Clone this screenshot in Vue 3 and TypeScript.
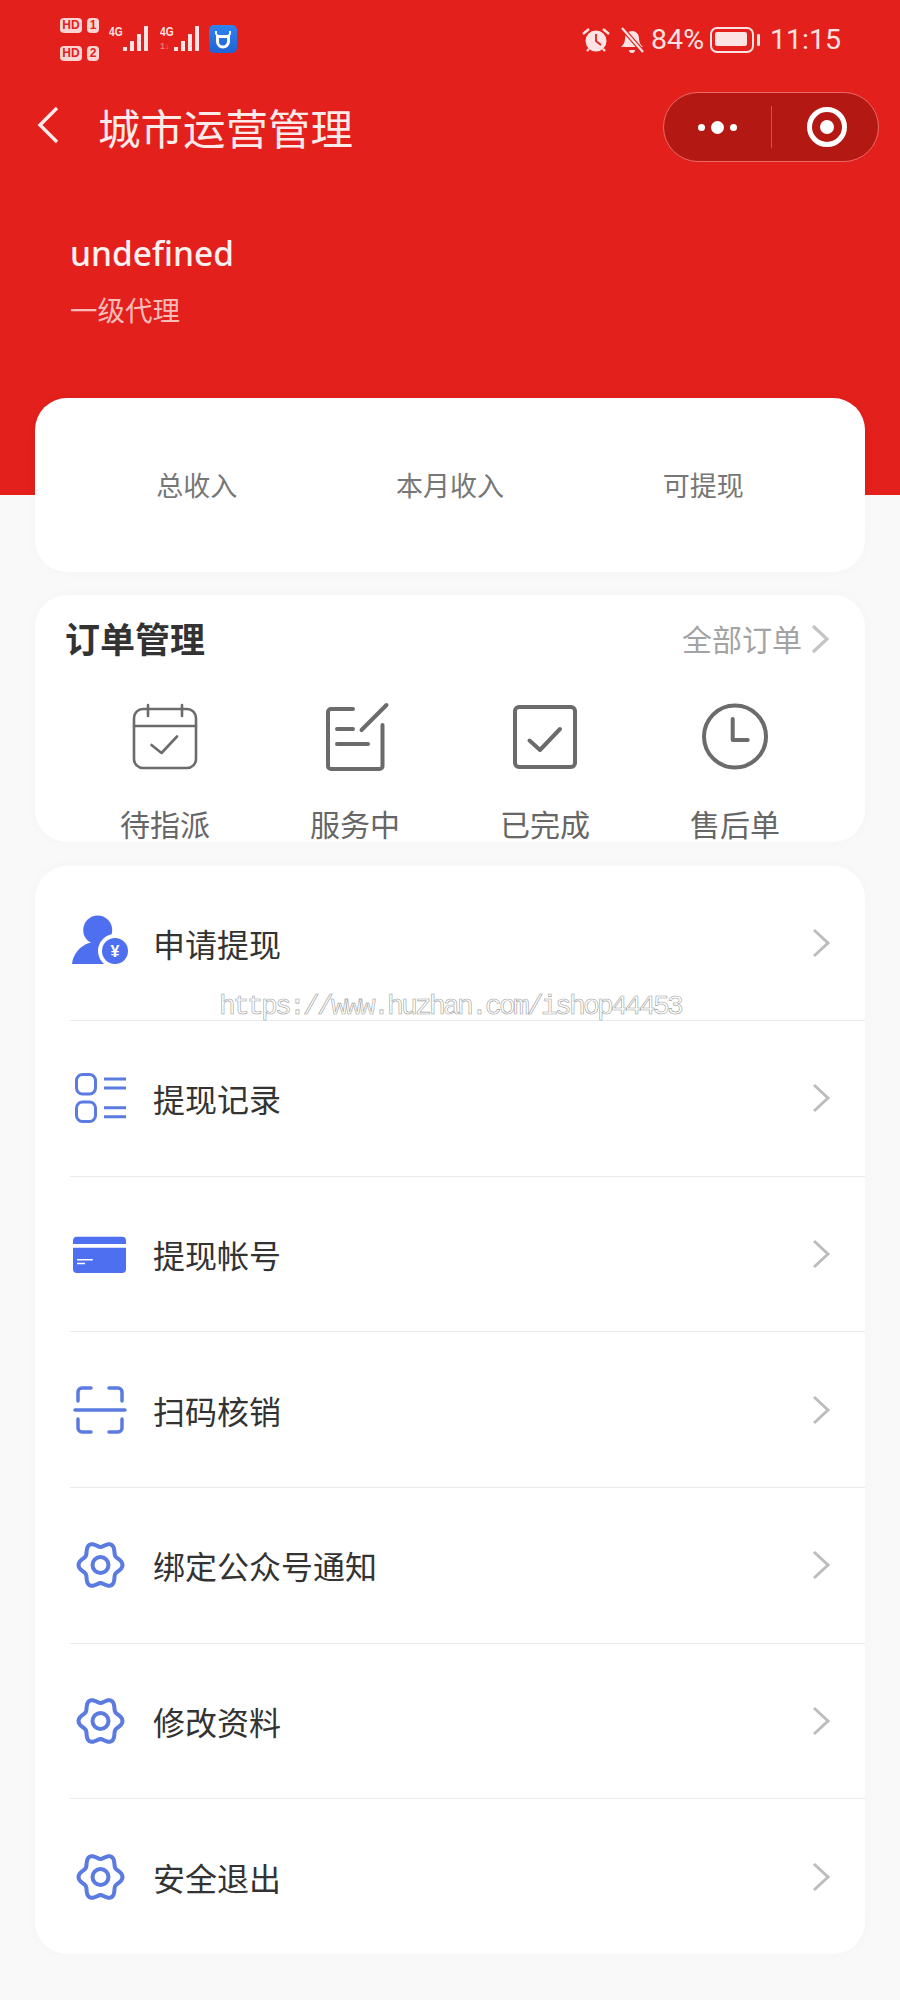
<script setup lang="ts">
interface MenuRow {
  label: string
  icon: 'user' | 'list' | 'card' | 'scan' | 'gear'
}

const stats = ['总收入', '本月收入', '可提现']

const menuRows: MenuRow[] = [
  { label: '申请提现', icon: 'user' },
  { label: '提现记录', icon: 'list' },
  { label: '提现帐号', icon: 'card' },
  { label: '扫码核销', icon: 'scan' },
  { label: '绑定公众号通知', icon: 'gear' },
  { label: '修改资料', icon: 'gear' },
  { label: '安全退出', icon: 'gear' }
]

// six soft lobes, wider on the sides than at the top
const gearPath = (() => {
  const pts: string[] = []
  for (let i = 0; i < 72; i++) {
    const a = (i / 72) * Math.PI * 2
    const r = 19.5 + 2.5 * Math.cos(6 * a)
    pts.push(`${(30.5 + r * Math.cos(a)).toFixed(2)} ${(30 + 1.06 * r * Math.sin(a)).toFixed(2)}`)
  }
  return `M${pts.join('L')}Z`
})()
</script>

<template>
  <div class="page">
    <header class="hero">
      <div class="status">
        <div class="sims">
          <div class="sim"><span class="hd">HD</span><span class="num">1</span></div>
          <div class="sim"><span class="hd">HD</span><span class="num">2</span></div>
        </div>
        <div class="signal">
          <span class="net">4G</span>
          <span class="bars"><i></i><i></i><i></i><i></i></span>
        </div>
        <div class="signal">
          <span class="net">4G</span>
          <span class="updown">1↓</span>
          <span class="bars"><i></i><i></i><i></i><i></i></span>
        </div>
        <div class="app-badge">
          <svg viewBox="0 0 28 28" width="28" height="28">
            <path d="M7 6v3l2 2h10l2-2V6" fill="none" stroke="#fff" stroke-width="1.800" />
            <path d="M8.500 11.500h11v5a5.500 5.500 0 0 1-11 0z" fill="none" stroke="#fff" stroke-width="3" />
          </svg>
        </div>
        <div class="status-right">
          <svg class="alarm" viewBox="0 0 30 28" width="30" height="28">
            <circle cx="15" cy="15" r="10.500" fill="#fde3e3" />
            <path d="M15 8v7l5 4" fill="none" stroke="#e3201b" stroke-width="1.800" />
            <path d="M2 8l6-5M28 8l-6-5M6 25l2-2M24 25l-2-2" stroke="#fde3e3" stroke-width="2.400" />
          </svg>
          <svg class="bell" viewBox="0 0 26 28" width="26" height="28">
            <path d="M2 21c2-2 4-4 4-9a7 7 0 0 1 14 0c0 5 2 7 4 9z" fill="#fde3e3" />
            <path d="M10 24h6a3 3 0 0 1-6 0z" fill="#fde3e3" />
            <path d="M3 2l21 24" stroke="#e3201b" stroke-width="4.500" />
            <path d="M3 2l21 24" stroke="#fde3e3" stroke-width="2.200" />
          </svg>
          <span class="pct">84%</span>
          <span class="battery"><span class="level"></span></span>
          <span class="clock">11:15</span>
        </div>
      </div>

      <div class="nav">
        <svg class="back" viewBox="0 0 22 40" width="22" height="40">
          <path d="M20 3L3 20l17 17" fill="none" stroke="#fdeaea" stroke-width="3.400" />
        </svg>
        <span class="title">城市运营管理</span>
        <div class="capsule">
          <div class="more"><i></i><i class="big"></i><i></i></div>
          <div class="cap-line"></div>
          <div class="target"><i></i></div>
        </div>
      </div>

      <div class="who">
        <div class="name">undefined</div>
        <div class="level-name">一级代理</div>
      </div>
    </header>

    <section class="card stats">
      <div v-for="s in stats" :key="s" class="stat">{{ s }}</div>
    </section>

    <section class="card orders">
      <div class="orders-head">
        <span class="orders-title">订单管理</span>
        <span class="orders-all">全部订单</span>
        <svg class="all-chev" viewBox="0 0 20 30" width="20" height="30">
          <path d="M3 2l14 13L3 28" fill="none" stroke="#c4c4c4" stroke-width="3.200" />
        </svg>
      </div>
      <div class="order-grid">
        <div class="order-item">
          <svg viewBox="0 0 70 70" width="70" height="70" fill="none" stroke="#6b6b6b" stroke-width="2.600" stroke-linecap="round" stroke-linejoin="round">
            <rect x="4" y="7" width="62" height="59" rx="9" />
            <path d="M4 24h62M18 3v11M52 3v11" />
            <path d="M21.500 43l10 8 15.500-16.500" />
          </svg>
          <span>待指派</span>
        </div>
        <div class="order-item">
          <svg viewBox="0 0 70 70" width="70" height="70" fill="none" stroke="#6b6b6b" stroke-width="4" stroke-linecap="round" stroke-linejoin="round">
            <path d="M33 7H11a3 3 0 0 0-3 3v54a3 3 0 0 0 3 3h48.500a3 3 0 0 0 3-3V23" />
            <path d="M41.500 28L66.500 3M17 27h16M17 42h31" />
          </svg>
          <span>服务中</span>
        </div>
        <div class="order-item">
          <svg viewBox="0 0 70 70" width="70" height="70" fill="none" stroke="#6b6b6b" stroke-width="4" stroke-linecap="round" stroke-linejoin="round">
            <rect x="5" y="5" width="60" height="60" rx="4" />
            <path d="M19.500 38.500L30 48l20-21" />
          </svg>
          <span>已完成</span>
        </div>
        <div class="order-item">
          <svg viewBox="0 0 70 70" width="70" height="70" fill="none" stroke="#6b6b6b" stroke-width="4" stroke-linecap="round" stroke-linejoin="round">
            <circle cx="35" cy="34.500" r="31" />
            <path d="M32.700 17v21h15" />
          </svg>
          <span>售后单</span>
        </div>
      </div>
    </section>

    <section class="card menu">
      <div v-for="row in menuRows" :key="row.label" class="menu-row">
        <svg v-if="row.icon === 'user'" viewBox="0 0 60 60" width="60" height="60">
          <circle cx="27.700" cy="17" r="14.500" fill="#4d6ff0" />
          <path d="M2 51c1-10 8-18 17-21h17c6 3 8 9 8 21z" fill="#4d6ff0" />
          <circle cx="45" cy="38" r="17" fill="#fff" />
          <circle cx="45" cy="38" r="13" fill="#4d6ff0" />
          <text x="45" y="44" text-anchor="middle" class="yen">¥</text>
        </svg>
        <svg v-else-if="row.icon === 'list'" viewBox="0 0 60 60" width="60" height="60" fill="none" stroke="#5b7be0" stroke-width="3">
          <rect x="6.500" y="6.500" width="19" height="19.500" rx="6" />
          <rect x="6.500" y="34" width="19" height="19.500" rx="6" />
          <path d="M34 11h22M34 20h22M34 39.700h22M34 48.700h22" />
        </svg>
        <svg v-else-if="row.icon === 'card'" viewBox="0 0 60 60" width="60" height="60">
          <path d="M3 16.700a4 4 0 0 1 4-4h45a4 4 0 0 1 4 4V20H3z" fill="#4d6ff0" />
          <path d="M3 23.700h53V45a4 4 0 0 1-4 4H7a4 4 0 0 1-4-4z" fill="#4d6ff0" />
          <path d="M7 35.700h15.700M7 39.500h8" stroke="#fff" stroke-width="1.600" />
        </svg>
        <svg v-else-if="row.icon === 'scan'" viewBox="0 0 60 60" width="60" height="60" fill="none" stroke="#5b7be0" stroke-width="3.500" stroke-linecap="round">
          <path d="M21 8h-9a4 4 0 0 0-4 4v9M39 8h9a4 4 0 0 1 4 4v9M21 52h-9a4 4 0 0 1-4-4v-9M39 52h9a4 4 0 0 0 4-4v-9" />
          <path d="M5 30h50" />
        </svg>
        <svg v-else viewBox="0 0 60 60" width="60" height="60" fill="none" stroke="#5b7be0" stroke-width="4" stroke-linejoin="round">
          <path :d="gearPath" />
          <circle cx="30.500" cy="30" r="8" />
        </svg>
        <span class="menu-label">{{ row.label }}</span>
        <svg class="chev" viewBox="0 0 20 32" width="20" height="32">
          <path d="M3 3l14 13L3 29" fill="none" stroke="#bdbdbd" stroke-width="3" />
        </svg>
      </div>
      <span class="mark">https://www.huzhan.com/ishop44453</span>
    </section>
  </div>
</template>

<style>
body {
  background: #f9f9f9;
}
</style>

<style scoped>
.page {
  height: 2000px;
  background: #f9f9f9;
  font-family: "Noto Sans CJK SC", "Noto Sans", sans-serif;
  overflow: hidden;
}

.hero {
  height: 495px;
  background: #e3201b;
  color: #fdeaea;
}

.status {
  height: 82px;
  padding: 11px 59px 0 60px;
  display: flex;
  align-items: flex-start;
  box-sizing: border-box;
  color: #fde3e3;
}

.sim {
  display: flex;
  gap: 5px;
  height: 28px;
  align-items: center;
}

.hd,
.num {
  font: bold 12px/15px "Liberation Sans", sans-serif;
  background: #fbd5d3;
  color: #e3201b;
  border-radius: 4px;
  text-align: center;
}

.hd {
  width: 22px;
}

.num {
  width: 12px;
}

.signal {
  margin: 15px 0 0 10px;
  width: 41px;
  height: 25px;
  position: relative;
}

.net {
  font: bold 12px/13px "Liberation Sans", sans-serif;
  position: absolute;
  left: 0;
  top: 0;
  transform: scaleX(0.85);
  transform-origin: left;
}

.updown {
  font: bold 9px/10px "Liberation Sans", sans-serif;
  position: absolute;
  left: 0;
  bottom: 0;
  color: #ef7470;
}

.bars {
  position: absolute;
  left: 14px;
  bottom: 0;
  display: flex;
  align-items: flex-end;
  gap: 3px;
}

.bars i {
  width: 4px;
  background: #fde3e3;
  display: block;
}

.bars i:nth-child(1) { height: 4px; }
.bars i:nth-child(2) { height: 10px; }
.bars i:nth-child(3) { height: 17px; }
.bars i:nth-child(4) { height: 25px; }

.app-badge {
  width: 28px;
  height: 28px;
  margin: 14px 0 0 8px;
  border-radius: 5px;
  background: linear-gradient(180deg, #2f84ef, #1f62d4);
}

.status-right {
  margin-left: auto;
  margin-top: 14px;
  display: flex;
  align-items: center;
  height: 30px;
}

.bell {
  margin-left: 8px;
}

.pct,
.clock {
  font: 28.500px/30px Roboto, sans-serif;
}

.pct {
  margin-left: 6px;
}

.battery {
  margin-left: 6px;
  width: 44px;
  height: 26px;
  border: 2.500px solid #fde3e3;
  border-radius: 7px;
  padding: 3px;
  box-sizing: border-box;
  position: relative;
}

.battery::after {
  content: "";
  position: absolute;
  right: -8px;
  top: 4.500px;
  width: 3px;
  height: 12px;
  background: #fde3e3;
  border-radius: 1px;
}

.level {
  display: block;
  width: 32px;
  height: 14px;
  background: #fde3e3;
  border-radius: 2px;
}

.clock {
  margin-left: 16px;
}

.nav {
  height: 90px;
  padding: 0 21px 0 37px;
  display: flex;
  align-items: center;
}

.back {
  margin-right: 39px;
  margin-top: -4px;
}

.title {
  font-size: 42.500px;
  line-height: 60px;
}

.capsule {
  margin-left: auto;
  width: 216px;
  height: 70px;
  box-sizing: border-box;
  background: #b41813;
  border: 1px solid #e96a66;
  border-radius: 35px;
  display: flex;
  align-items: center;
}

.more {
  width: 107px;
  display: flex;
  align-items: center;
  justify-content: center;
  gap: 6px;
}

.more i {
  width: 7px;
  height: 7px;
  border-radius: 50%;
  background: #fff;
}

.more i.big {
  width: 13px;
  height: 13px;
}

.cap-line {
  width: 1px;
  height: 42px;
  background: #d4524e;
}

.target {
  flex: 1;
  padding-left: 4px;
  display: flex;
  justify-content: center;
}

.target i {
  width: 40px;
  height: 40px;
  box-sizing: border-box;
  border: 5px solid #fff;
  border-radius: 50%;
  display: flex;
  align-items: center;
  justify-content: center;
}

.target i::after {
  content: "";
  width: 14px;
  height: 14px;
  border-radius: 50%;
  background: #fff;
}

.who {
  padding: 59px 70px 0;
}

.name {
  font: 500 33.500px/44px "Noto Sans", sans-serif;
  color: #fdf0f0;
}

.level-name {
  margin-top: 16px;
  font-size: 27.500px;
  line-height: 36px;
  color: #f8bdbb;
}

.card {
  margin: 0 35px;
  background: #fff;
  border-radius: 32px;
  box-shadow: 0 0 14px rgba(0, 0, 0, 0.025);
}

.stats {
  margin-top: -97px;
  height: 174px;
  padding: 0 35px;
  display: grid;
  grid-template-columns: repeat(3, 1fr);
  align-items: center;
  position: relative;
}

.stat {
  margin-top: -1px;
  text-align: center;
  font-size: 27px;
  color: #777;
}

.orders {
  margin-top: 23px;
  height: 247px;
  padding: 0 35px;
}

.orders-head {
  height: 84px;
  margin-left: -5px;
  display: flex;
  align-items: center;
}

.orders-title {
  font-size: 35px;
  font-weight: 700;
  color: #333;
}

.orders-all {
  margin-left: auto;
  margin-right: 8px;
  margin-top: 2px;
  font-size: 30px;
  color: #a3a3a3;
}

.all-chev {
  margin-top: 4px;
}

.order-grid {
  margin-top: 23px;
  display: grid;
  grid-template-columns: repeat(4, 1fr);
}

.order-item {
  display: flex;
  flex-direction: column;
  align-items: center;
  font-size: 30px;
  line-height: 34px;
  color: #666;
}

.order-item span {
  margin-top: 34px;
}

.menu {
  position: relative;
  margin-top: 24px;
  height: 1088px;
}

.menu-row {
  height: 155.670px;
  box-sizing: border-box;
  margin-left: 35px;
  padding-right: 34px;
  display: flex;
  align-items: center;
  border-bottom: 1px solid #e9ebeb;
}

.menu-row:first-child {
  height: 155px;
}

.menu-row:last-of-type {
  border-bottom: 0;
}

.menu-label {
  margin-left: 23px;
  font-size: 32px;
  color: #333;
}

.chev {
  margin-left: auto;
}

.yen {
  font: bold 16px "Liberation Sans", sans-serif;
  fill: #fff;
}

.mark {
  position: absolute;
  left: 184px;
  top: 126px;
  font: 28px/30px "Liberation Mono", monospace;
  letter-spacing: -2.800px;
  color: #fff;
  -webkit-text-stroke: 0.600px #a0a0a0;
  white-space: nowrap;
}
</style>
